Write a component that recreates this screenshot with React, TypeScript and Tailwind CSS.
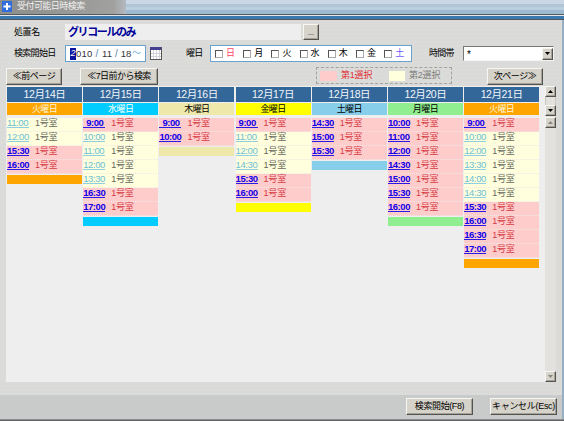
import React from 'react';

type Slot = [time: string, rank: 1 | 2];
type Day = { date: string; name: string; tint: string; ink: string; slots: Slot[] };

const days: Day[] = [
  { date: '12月14日', name: '火曜日', tint: 'bg-[#ffa500]', ink: 'text-[#fff6dc]', slots: [['11:00', 2], ['12:00', 2], ['15:30', 1], ['16:00', 1]] },
  { date: '12月15日', name: '水曜日', tint: 'bg-[#00ccff]', ink: 'text-white', slots: [['9:00', 1], ['10:00', 2], ['11:00', 2], ['12:00', 2], ['13:30', 2], ['16:30', 1], ['17:00', 1]] },
  { date: '12月16日', name: '木曜日', tint: 'bg-[#eee8aa]', ink: 'text-black', slots: [['9:00', 1], ['10:00', 1]] },
  { date: '12月17日', name: '金曜日', tint: 'bg-[#ffff00]', ink: 'text-black', slots: [['9:00', 1], ['11:00', 2], ['12:00', 2], ['14:30', 2], ['15:30', 1], ['16:00', 1]] },
  { date: '12月18日', name: '土曜日', tint: 'bg-[#87ceeb]', ink: 'text-black', slots: [['14:30', 1], ['15:00', 1], ['15:30', 1]] },
  { date: '12月20日', name: '月曜日', tint: 'bg-[#90ee90]', ink: 'text-black', slots: [['10:00', 1], ['11:00', 1], ['12:00', 1], ['14:30', 1], ['15:00', 1], ['15:30', 1], ['16:00', 1]] },
  { date: '12月21日', name: '火曜日', tint: 'bg-[#ffa500]', ink: 'text-[#fff6dc]', slots: [['9:00', 1], ['10:00', 2], ['12:00', 2], ['13:30', 2], ['14:00', 2], ['14:30', 2], ['15:30', 1], ['16:00', 1], ['16:30', 1], ['17:00', 1]] },
];

const weekdays: [string, string][] = [
  ['日', 'text-[#ff4060]'], ['月', 'text-black'], ['火', 'text-black'], ['水', 'text-black'],
  ['木', 'text-black'], ['金', 'text-black'], ['土', 'text-[#6a5cff]'],
];

function Button({ className, children }: { className: string; children: React.ReactNode }) {
  return (
    <button className={`flex shrink-0 items-center justify-center whitespace-nowrap border border-t-[#f6f6f2] border-l-[#f6f6f2] border-r-[#55534e] border-b-[#55534e] bg-[#d6d3ca] shadow-[inset_-1px_-1px_0_#a5a299] text-black ${className}`}>
      {children}
    </button>
  );
}

function Arrow({ up, muted }: { up?: boolean; muted?: boolean }) {
  return (
    <svg width="5" height="3" viewBox="0 0 5 3" className={muted ? 'fill-[#88867f]' : 'fill-black'}>
      <path d={up ? 'M0 3L2.5 0L5 3Z' : 'M0 0L2.5 3L5 0Z'} />
    </svg>
  );
}

function DayColumn({ day }: { day: Day }) {
  return (
    <div className="w-[75px] shrink-0">
      <div className="flex h-[15px] items-center justify-center bg-[#336699] text-[10.5px] tracking-[-0.4px] text-[#f2f6fa]">{day.date}</div>
      <div className={`mt-px flex h-[12px] items-center justify-center text-[9px] tracking-[-0.6px] ${day.tint} ${day.ink}`}>{day.name}</div>
      <div className="mt-[3px]">
        {day.slots.map(([time, rank]) => (
          <div key={time} className={`flex h-[14px] items-start border-b border-dotted border-[#eee9e9] ${rank === 1 ? 'bg-[#ffcccc]' : 'bg-[#ffffdd]'}`}>
            <span className="w-[28px] shrink-0">
              <a className={`block h-[10px] w-[22px] border-b leading-[9px] ${time.length === 4 ? 'pl-[3px]' : ''} ${rank === 1 ? 'border-[#2a1ae8] text-[9.5px] font-bold tracking-[-0.45px] text-[#1000e8]' : 'border-[#8fcfe0] text-[9.5px] tracking-[-0.4px] text-[#6cc0d6]'}`}>{time}</a>
            </span>
            <span className={`text-[9px] leading-[10px] tracking-[-0.2px] ${rank === 1 ? 'text-[#d53a42]' : 'text-[#66665c]'}`}>1号室</span>
          </div>
        ))}
      </div>
      <div className={`mt-px h-[9px] ${day.tint}`} />
    </div>
  );
}

export default function App() {
  return (
    <div className="flex h-[421px] w-[564px] flex-col overflow-hidden whitespace-nowrap bg-[#dadad8] font-['Liberation_Sans','Noto_Sans_CJK_JP',sans-serif] text-[9px] leading-none text-black">
      <header className="flex h-[14px] shrink-0 items-center bg-[linear-gradient(#cad7e5_0_4px,#b0c6d8_4px_7px,#bad0df_7px_10px,#9dbad0_10px)] text-[#f1f1ef]">
        <div className="flex h-full w-[126px] items-start bg-[linear-gradient(90deg,#8d8d8b,#a0a09e_90%,#b4bac0)] pl-[2px]">
          <svg width="10" height="11" viewBox="0 0 10 11" className="mt-px">
            <rect width="10" height="11" fill="#2f6edb" />
            <path d="M5 2V9M1.5 5.5H8.5" stroke="#fff" strokeWidth="2" />
          </svg>
          <span className="ml-[5px] mt-[1.5px] tracking-[-0.55px]">受付可能日時検索</span>
        </div>
      </header>
      <div className="h-[6px] shrink-0 bg-[linear-gradient(#555b62_0_1px,#e4e6e8_1px_2px,#3b78b0_2px_5px,#55575a_5px)]" />

      <div className="flex h-[375px] shrink-0 border-r-2 border-[#98afc3] bg-[#dadad8] bg-[radial-gradient(circle,#e2e2df_0.5px,transparent_0.8px)] bg-[length:4px_4px]">
        <div className="flex w-[562px] flex-col pl-[6px]">
          <div className="mt-[4px] flex h-[16px] items-center">
            <span className="w-[59px] pl-[8px] tracking-[-0.4px]">処置名</span>
            <div className="flex h-[16px] w-[236px] items-center bg-[#eeeeee] pl-[3px] text-[11px] font-bold tracking-[-1.4px] text-[#000099]">グリコールのみ</div>
            <Button className="ml-[2px] h-[16px] w-[16px] text-[7px]">...</Button>
          </div>

          <div className="mt-[5px] flex h-[17px] items-center">
            <span className="w-[59px] pl-[8px] tracking-[-0.7px]">検索開始日</span>
            <div className="flex h-[17px] w-[81px] items-center border border-[#6aa2cf] bg-white pl-[4px] text-[10px] text-[#34343a]">
              <span className="flex h-[12px] w-[6px] items-center justify-center bg-[#0a149c] text-[9px] italic text-white">2</span>
              <span className="w-[17px] text-[9.5px] tracking-[0.2px]">010</span>
              <span className="w-[8px] text-center text-[#5588aa]">/</span>
              <span className="w-[12px] text-center text-[9.5px]">11</span>
              <span className="w-[7px] text-center text-[#5588aa]">/</span>
              <span className="w-[12px] text-center text-[9.5px]">18</span>
              <span className="text-[9px] text-[#70b4d8]">～</span>
            </div>
            <svg width="13" height="14" viewBox="0 0 13 14" className="ml-[3px] -translate-y-px" shapeRendering="crispEdges">
              <path d="M1 1H12V13H1Z" fill="#fff" stroke="#555" />
              <path d="M1 1H12V4H1Z" fill="#454190" />
              <path d="M2 7H12M2 10H12M4.5 4V13M7.5 4V13M10.5 4V13" stroke="#d2d2da" fill="none" />
            </svg>
            <span className="ml-[24px] w-[24px] tracking-[-0.8px]">曜日</span>
            <div className="flex h-[17px] w-[202px] items-center border border-[#6aa2cf] bg-white pl-[4px]">
              {weekdays.map(([label, ink]) => (
                <label key={label} className={`flex w-[28.2px] shrink-0 items-center ${ink}`}>
                  <span className="h-[8px] w-[8px] border border-t-[#555] border-l-[#555] border-r-[#aaa] border-b-[#aaa] bg-white" />
                  <span className="ml-[3px]">{label}</span>
                </label>
              ))}
            </div>
            <span className="ml-[17px] w-[34px] tracking-[-0.7px]">時間帯</span>
            <div className="flex h-[15px] w-[91px] items-center border border-t-[#777] border-l-[#777] border-r-[#f4f4f4] border-b-[#f4f4f4] bg-white pl-[3px]">
              <span className="flex-1 pt-[2px] text-[10px]">*</span>
              <Button className="h-[12px] w-[11px]"><Arrow /></Button>
            </div>
          </div>

          <div className="mt-[5px] flex h-[19px] items-start">
            <Button className="mt-px h-[17px] w-[56px] tracking-[-0.5px]">≪前ページ</Button>
            <Button className="ml-[18px] mt-px h-[17px] w-[78px] tracking-[-0.55px]">≪7日前から検索</Button>
            <div className="ml-[158px] flex h-[17px] w-[136px] items-center border border-dashed border-[#a4a49f] pl-[3px]">
              <span className="h-[10px] w-[17px] bg-[#ffcccc]" />
              <span className="ml-[4px] w-[32px] tracking-[-0.2px] text-[#e23036]">第1選択</span>
              <span className="ml-[16px] h-[10px] w-[16px] bg-[#ffffdd]" />
              <span className="ml-[4px] tracking-[-0.2px] text-[#7c7c78]">第2選択</span>
            </div>
            <Button className="ml-[35px] mt-px h-[17px] w-[56px] tracking-[-0.5px]">次ページ≫</Button>
          </div>

          <div className="flex h-[296px]">
            <main className="flex w-[539px] shrink-0 gap-[1.2px] bg-[#eeeeee] pl-px pt-px">
              {days.map((day) => <DayColumn key={day.date} day={day} />)}
            </main>
            <div className="flex h-full w-[11px] flex-col bg-[#e2e1dd]">
              <Button className="h-[11px] w-[11px]"><Arrow up /></Button>
              <div className="h-[8px] border-x border-[#c8c6bf]" />
              <Button className="h-[11px] w-[11px]"><Arrow /></Button>
              <Button className="mt-px h-[11px] w-[11px]"><Arrow up muted /></Button>
              <Button className="mt-auto h-[11px] w-[11px]"><Arrow muted /></Button>
            </div>
          </div>
        </div>
      </div>

      <footer className="flex h-[24px] shrink-0 items-start justify-end border-r-2 border-[#98afc3] bg-[#c9cbca] pr-[5px] pt-[3px]">
        <Button className="h-[17px] w-[67px] tracking-[-0.4px]">検索開始(F8)</Button>
        <Button className="ml-[17px] h-[17px] w-[67px] tracking-[-0.3px]">キャンセル(Esc)</Button>
      </footer>
      <div className="h-[2px] shrink-0 bg-[linear-gradient(#8b8c8b_0_1px,#656667_1px)]" />
    </div>
  );
}
